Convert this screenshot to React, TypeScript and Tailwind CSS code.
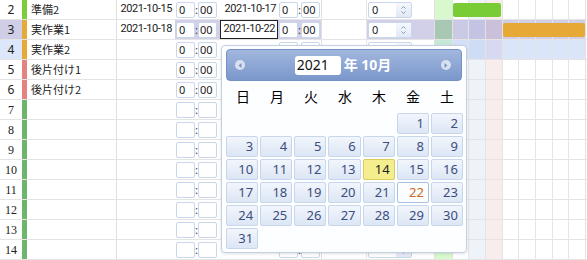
import React from "react";

type Row = {
  n: number;
  bar: string;
  name?: string;
  s?: string;
  e?: string;
  st?: boolean;
  et?: boolean;
  spin?: string;
  sel?: boolean;
  hov?: boolean;
};

// rows 4+ sit under the date picker on the right, so their end time / spinner values stay empty
const rows: Row[] = [
  { n: 2, bar: "bg-[#7ccd3b]", name: "準備2", s: "2021-10-15", e: "2021-10-17", st: true, et: true, spin: "0" },
  { n: 3, bar: "bg-[#e6aa38]", name: "実作業1", s: "2021-10-18", e: "2021-10-22", st: true, et: true, spin: "0", sel: true },
  { n: 4, bar: "bg-[#e6aa38]", name: "実作業2", st: true, hov: true },
  { n: 5, bar: "bg-[#e58383]", name: "後片付け1", st: true },
  { n: 6, bar: "bg-[#e58383]", name: "後片付け2", st: true },
  ...[7, 8, 9, 10, 11, 12, 13, 14].map((n) => ({ n, bar: "bg-[#6db66d]" })),
];

const dayW = ["w-[18px]", "w-[16px]", "w-[17px]", "w-[17px]", "w-[16px]", "w-[17px]", "w-[17px]", "w-[16px]", "w-[17px]"];

function dayBg(r: Row, c: number) {
  if (r.sel) return ["bg-[#a9c8b3]", "bg-[#cbcae4]", "bg-[#c3c4e4]", "bg-[#cbc0d9]"][c] ?? "bg-[#d0cee7]";
  if (r.hov) return ["bg-[#c6e8d6]", "bg-[#d3e0f7]", "bg-[#cfdcf6]", "bg-[#d6d9ef]"][c] ?? "bg-[#dae5fa]";
  return ["bg-[#d8f9ce]", "bg-white", "bg-[#eef3fa]", "bg-[#f8ecec]"][c] ?? "bg-white";
}

const box = "h-[16px] w-[19px] bg-white border border-[#c8d7ec] rounded-[2px] flex items-center text-[11px] text-[#222] leading-none";

function Time({ on, sel }: { on?: boolean; sel?: boolean }) {
  return (
    <div className={`flex items-center pl-[1px] h-full ${sel ? "bg-[#d2d0e8]" : ""}`}>
      <div className={`${box} pl-[2px]`}>{on ? "0" : ""}</div>
      <span className="w-[3px] flex justify-center text-[11px] text-[#333] leading-none">:</span>
      <div className={`${box} pl-[1px]`}>{on ? "00" : ""}</div>
    </div>
  );
}

function Spinner({ v }: { v?: string }) {
  return (
    <div className="h-[16px] w-[44px] bg-white border border-[#c8d7ec] rounded-[2px] flex items-center">
      <span className="flex-1 pl-[3px] text-[11px] text-[#222] leading-none">{v}</span>
      <div className="w-[15px] h-full flex flex-col items-center justify-center gap-[2px] bg-gradient-to-b from-[#f5f8fd] to-[#e2e9f5]">
        <svg width="5" height="3" viewBox="0 0 5 3"><path d="M0.5 2.5 L2.5 0.5 L4.5 2.5" stroke="#8d9bb8" fill="none" /></svg>
        <svg width="5" height="3" viewBox="0 0 5 3"><path d="M0.5 0.5 L2.5 2.5 L4.5 0.5" stroke="#8d9bb8" fill="none" /></svg>
      </div>
    </div>
  );
}

function Arrow({ dir }: { dir: "l" | "r" }) {
  return (
    <div className="size-[10px] rounded-full bg-[#d7e0f0] flex items-center justify-center">
      <svg width="4" height="5" viewBox="0 0 4 5">
        <path d={dir === "l" ? "M3.5 0 L0.5 2.5 L3.5 5Z" : "M0.5 0 L3.5 2.5 L0.5 5Z"} fill="#7d93c2" />
      </svg>
    </div>
  );
}

const weekDays = ["日", "月", "火", "水", "木", "金", "土"];

function Calendar() {
  const cells: (number | null)[] = [null, null, null, null, null, 1, 2];
  for (let d = 3; d <= 31; d++) cells.push(d);
  return (
    <div className="absolute left-[221px] top-[45px] w-[246px] h-[208px] bg-[#fdfeff] border border-[#c3d0e3] rounded-[4px] shadow-[0_1px_3px_rgba(0,0,0,0.12)] pt-[3px] px-[4px]">
      {/* header */}
      <div className="h-[32px] rounded-[4px] border border-[#7590c4] bg-gradient-to-b from-[#a2b7de] to-[#7b97cb] flex items-center justify-between pl-[8px] pr-[10px]">
        <Arrow dir="l" />
        <div className="flex items-center gap-[3px]">
          <div className="w-[46px] h-[19px] bg-white rounded-[3px] flex items-center pl-[2px] text-[14px] leading-none text-[#111]">2021</div>
          <span className="text-[14px] leading-none font-bold text-white">年 10月</span>
        </div>
        <Arrow dir="r" />
      </div>
      {/* weekday names */}
      <div className="grid grid-cols-[repeat(7,34px)] h-[32px] items-center">
        {weekDays.map((w) => (
          <span key={w} className="text-center text-[14px] leading-none text-black">{w}</span>
        ))}
      </div>
      {/* days */}
      <div className="grid grid-cols-7 gap-[2px] w-[237px]">
        {cells.map((d, i) =>
          d === null ? (
            <div key={i} className="h-[21px]" />
          ) : (
            <div
              key={i}
              className={`h-[21px] rounded-[2px] border flex items-center justify-end pr-[4px] text-[13px] leading-none ${
                d === 14
                  ? "bg-[#f4ee8e] border-[#d9cc5a] text-[#222]"
                  : d === 22
                  ? "bg-[#fbfdff] border-[#a8bfe0] text-[#d0661c]"
                  : "bg-gradient-to-b from-[#f2f6fc] to-[#dce6f5] border-[#c8d6eb] text-[#3c4d7e]"
              }`}
            >
              {d}
            </div>
          )
        )}
      </div>
    </div>
  );
}

export default function App() {
  return (
    <div className="relative w-[587px] h-[260px] overflow-hidden bg-white font-['Noto_Sans','Noto_Sans_CJK_JP',sans-serif]">
      {rows.map((r) => (
        <div key={r.n} className="flex h-[20px] border-b border-[#e4e4e4]">
          {/* row number */}
          <div
            className={`w-[22px] flex items-center justify-center text-[12px] text-[#222] ${
              r.n >= 7 ? "font-['Liberation_Serif',serif]" : ""
            } ${r.sel ? "bg-[#d0cee7]" : r.hov ? "bg-[#dce7fb]" : ""}`}
          >
            {r.n}
          </div>
          <div className={`w-[5px] ${r.bar}`} />
          {/* name */}
          <div className="w-[90px] border-r border-[#e0e0e0] flex items-center pl-[4px] text-[11px] text-[#222] font-['Noto_Sans_CJK_JP',sans-serif]">
            {r.name}
          </div>
          {/* start date */}
          <div className="w-[58px] flex items-center justify-end pr-[3px] text-[11px] tracking-[-0.4px] text-[#222] font-['Roboto',sans-serif]">
            {r.s}
          </div>
          <div className="w-[45px]">
            <Time on={r.st} sel={r.sel} />
          </div>
          {/* end date */}
          <div className="w-[58px] flex">
            <div
              className={`flex-1 flex items-center justify-end pr-[2px] text-[11px] tracking-[-0.4px] text-[#222] font-['Roboto',sans-serif] ${
                r.sel ? "border border-[#222]" : ""
              }`}
            >
              {r.e}
            </div>
          </div>
          <div className="w-[44px] border-r border-[#e0e0e0]">
            <Time on={r.et} sel={r.sel} />
          </div>
          <div className="w-[45px] border-r border-[#e8e8e8]" />
          {/* spinner */}
          <div className={`w-[68px] flex items-center pl-[1px] border-r border-[#e0e0e0] ${r.sel ? "bg-[#d2d0e8]" : ""}`}>
            <Spinner v={r.spin} />
          </div>
          {/* gantt */}
          <div className="relative flex flex-1">
            {dayW.map((w, c) => (
              <div key={c} className={`${w} ${dayBg(r, c)} border-r border-[#e4e4e4]`} />
            ))}
            {r.n === 2 && (
              <div className="absolute left-[18px] top-[3px] w-[48px] h-[14px] rounded-[2px] bg-[#79cc35]" />
            )}
            {r.n === 3 && (
              <div className="absolute left-[68px] top-[3px] w-[82px] h-[14px] rounded-[2px] bg-[#e6a935]" />
            )}
          </div>
        </div>
      ))}
      <Calendar />
    </div>
  );
}
